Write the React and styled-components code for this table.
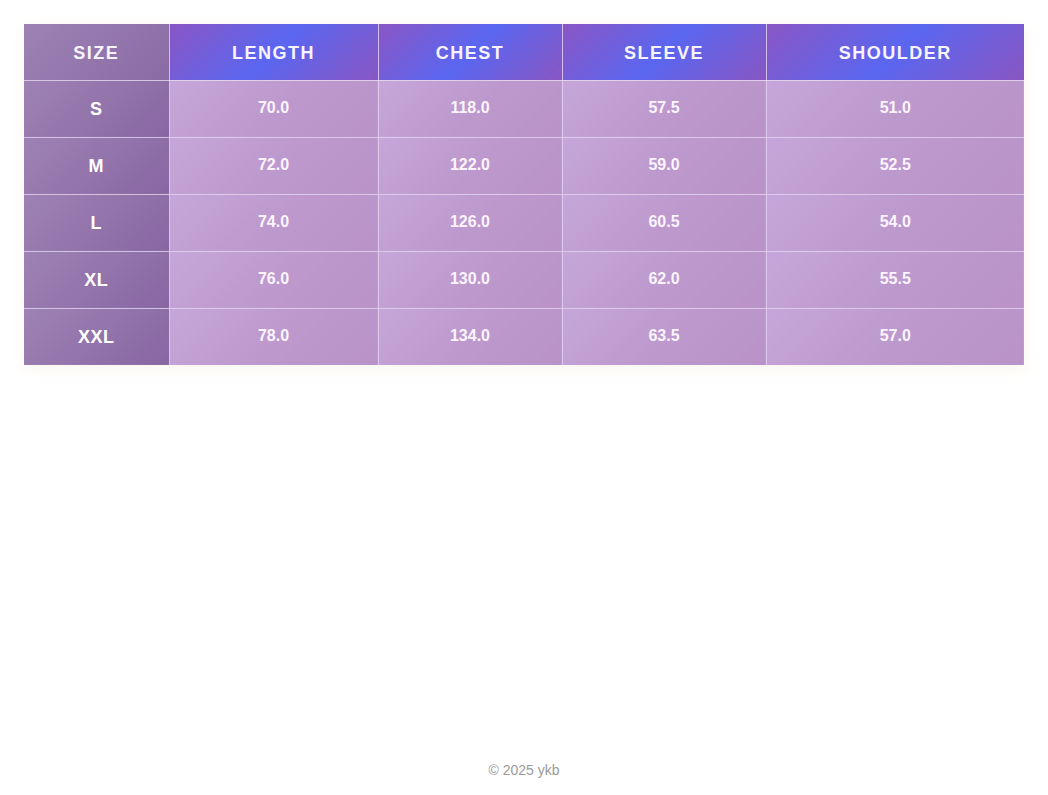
import React from "react";
import styled, { createGlobalStyle } from "styled-components";

const GlobalStyle = createGlobalStyle`
  html, body {
    margin: 0;
    padding: 0;
    background: #ffffff;
    font-family: "Liberation Sans", Arial, sans-serif;
  }
`;

const Page = styled.div`
  min-height: 100vh;
  display: flex;
  flex-direction: column;
  box-sizing: border-box;
  padding: 24px 24px 0;
`;

const Table = styled.table`
  width: 1000px;
  table-layout: fixed;
  border-collapse: collapse;
  box-shadow: 0 4px 14px rgba(240, 230, 210, 0.35);
`;

const HeadCell = styled.th`
  height: 56px;
  padding: 4px 0 0;
  box-sizing: border-box;
  border: 1px solid rgba(236, 224, 246, 0.75);
  border-top: none;
  color: #f8f4ff;
  font-size: 18px;
  font-weight: 700;
  letter-spacing: 1.5px;
  text-align: center;
  vertical-align: middle;
  background: ${(p) =>
    p.$size
      ? "linear-gradient(135deg, #9d82b4 0%, #8a6ba5 100%)"
      : "linear-gradient(135deg, #8a56c4 0%, #5a66f0 50%, #8856c2 100%)"};
  &:first-child {
    border-left: none;
  }
  &:last-child {
    border-right: none;
  }
`;

const SizeCell = styled.td`
  height: 57px;
  padding: 2px 0 0;
  box-sizing: border-box;
  border: 1px solid rgba(222, 204, 236, 0.85);
  border-left: none;
  color: #ffffff;
  font-size: 18px;
  font-weight: 700;
  letter-spacing: 0.5px;
  text-align: center;
  background: linear-gradient(135deg, #9e82b4 0%, #8866a2 100%);
`;

const ValueCell = styled.td`
  height: 57px;
  padding: 0 0 2px;
  box-sizing: border-box;
  border: 1px solid rgba(226, 208, 238, 0.85);
  color: #fbf4fd;
  font-size: 16px;
  font-weight: 700;
  text-align: center;
  background: linear-gradient(135deg, #c6a6da 0%, #bc98cc 55%, #b993c8 100%);
  &:last-child {
    border-right: none;
  }
`;

const BodyRow = styled.tr`
  &:last-child td {
    border-bottom: none;
  }
`;

const Footer = styled.footer`
  margin-top: auto;
  padding: 0 0 17px;
  text-align: center;
  color: #9a9a9a;
  font-size: 14px;
  line-height: 16px;
`;

const columns = [
  { key: "size", label: "SIZE", width: 145 },
  { key: "length", label: "LENGTH", width: 209 },
  { key: "chest", label: "CHEST", width: 184 },
  { key: "sleeve", label: "SLEEVE", width: 204 },
  { key: "shoulder", label: "SHOULDER", width: 258 },
];

const rows = [
  { size: "S", length: "70.0", chest: "118.0", sleeve: "57.5", shoulder: "51.0" },
  { size: "M", length: "72.0", chest: "122.0", sleeve: "59.0", shoulder: "52.5" },
  { size: "L", length: "74.0", chest: "126.0", sleeve: "60.5", shoulder: "54.0" },
  { size: "XL", length: "76.0", chest: "130.0", sleeve: "62.0", shoulder: "55.5" },
  { size: "XXL", length: "78.0", chest: "134.0", sleeve: "63.5", shoulder: "57.0" },
];

export default function App() {
  return (
    <>
      <GlobalStyle />
      <Page>
        <Table>
          <colgroup>
            {columns.map((c) => (
              <col key={c.key} style={{ width: c.width }} />
            ))}
          </colgroup>
          <thead>
            <tr>
              {columns.map((c) => (
                <HeadCell key={c.key} $size={c.key === "size"}>
                  {c.label}
                </HeadCell>
              ))}
            </tr>
          </thead>
          <tbody>
            {rows.map((r) => (
              <BodyRow key={r.size}>
                <SizeCell>{r.size}</SizeCell>
                {columns.slice(1).map((c) => (
                  <ValueCell key={c.key}>{r[c.key]}</ValueCell>
                ))}
              </BodyRow>
            ))}
          </tbody>
        </Table>
        <Footer>© 2025 ykb</Footer>
      </Page>
    </>
  );
}
